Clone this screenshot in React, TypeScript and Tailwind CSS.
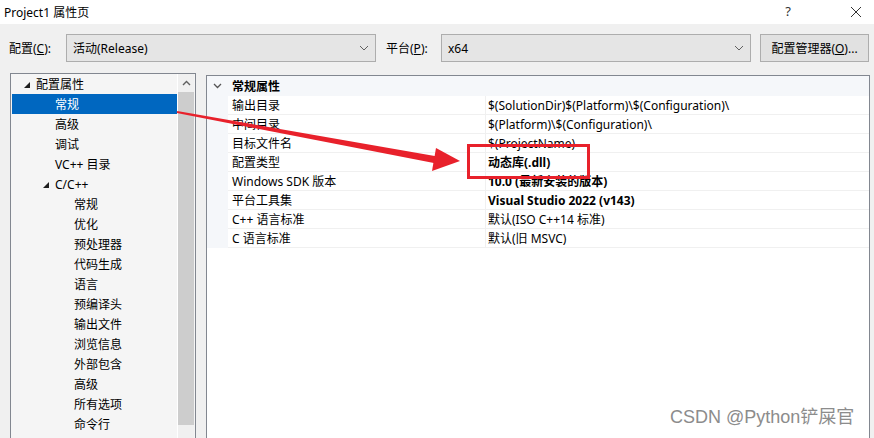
import React from "react";

const FONT = { fontFamily: '"Noto Sans", "Noto Sans CJK SC", sans-serif' };

function Chevron() {
  return (
    <svg width="10" height="6" viewBox="0 0 10 6" className="shrink-0">
      <polyline points="1,1 5,5 9,1" fill="none" stroke="#606060" strokeWidth="1" />
    </svg>
  );
}

function Dropdown({ value, width }: { value: string; width: string }) {
  return (
    <div className={`${width} h-[28px] bg-[#e5e5e5] border border-[#adadad] flex items-center justify-between pl-[6px] pr-[6px]`}>
      <span className="text-[12px] text-black pt-[2px]">{value}</span>
      <Chevron />
    </div>
  );
}

type TreeItem = { label: string; level: number; expander?: boolean; selected?: boolean };

const tree: TreeItem[] = [
  { label: "配置属性", level: 0, expander: true },
  { label: "常规", level: 1, selected: true },
  { label: "高级", level: 1 },
  { label: "调试", level: 1 },
  { label: "VC++ 目录", level: 1 },
  { label: "C/C++", level: 1, expander: true },
  { label: "常规", level: 2 },
  { label: "优化", level: 2 },
  { label: "预处理器", level: 2 },
  { label: "代码生成", level: 2 },
  { label: "语言", level: 2 },
  { label: "预编译头", level: 2 },
  { label: "输出文件", level: 2 },
  { label: "浏览信息", level: 2 },
  { label: "外部包含", level: 2 },
  { label: "高级", level: 2 },
  { label: "所有选项", level: 2 },
  { label: "命令行", level: 2 },
];

const rows: { name: string; value: string; bold?: boolean }[] = [
  { name: "输出目录", value: "$(SolutionDir)$(Platform)\\$(Configuration)\\" },
  { name: "中间目录", value: "$(Platform)\\$(Configuration)\\" },
  { name: "目标文件名", value: "$(ProjectName)" },
  { name: "配置类型", value: "动态库(.dll)", bold: true },
  { name: "Windows SDK 版本", value: "10.0 (最新安装的版本)", bold: true },
  { name: "平台工具集", value: "Visual Studio 2022 (v143)", bold: true },
  { name: "C++ 语言标准", value: "默认(ISO C++14 标准)" },
  { name: "C 语言标准", value: "默认(旧 MSVC)" },
];

function Expander() {
  return (
    <svg width="7" height="7" viewBox="0 0 7 7" className="shrink-0">
      <polygon points="6,0 6,6 0,6" fill="#1e1e1e" />
    </svg>
  );
}

export default function App() {
  return (
    <div className="relative w-[874px] h-[438px] overflow-hidden bg-[#f0f0f0] text-black" style={FONT}>
      {/* Title bar */}
      <div className="h-[24px] bg-white flex items-center justify-between pl-[4px]">
        <span className="text-[12px] pt-[1px]">Project1 属性页</span>
        <div className="flex items-center">
          <span className="text-[13px] text-[#333] mr-[59px]">?</span>
          <svg width="12" height="12" viewBox="0 0 12 12" className="mr-[12px]">
            <line x1="1" y1="1" x2="11" y2="11" stroke="#333" strokeWidth="1" />
            <line x1="11" y1="1" x2="1" y2="11" stroke="#333" strokeWidth="1" />
          </svg>
        </div>
      </div>

      {/* Toolbar */}
      <div className="flex items-center h-[28px] mt-[10px] pl-[9px]">
        <span className="text-[12px] w-[57px] pt-[2px]">
          配置(<span className="underline">C</span>):
        </span>
        <Dropdown value="活动(Release)" width="w-[310px]" />
        <span className="text-[12px] ml-[10px] w-[55px] pt-[2px]">
          平台(<span className="underline">P</span>):
        </span>
        <Dropdown value="x64" width="w-[310px]" />
        <div className="ml-[9px] w-[109px] h-[28px] bg-[#e1e1e1] border border-[#adadad] flex items-center justify-center text-[12px] pt-[2px]">
          配置管理器(<span className="underline">O</span>)...
        </div>
      </div>

      {/* Main */}
      <div className="flex items-start mt-[11px] pl-[10px]">
        {/* Left tree panel */}
        <div className="w-[186px] h-[380px] border border-[#828790] bg-[#f5f5f5] flex pl-[1px]">
          <div className="w-[165px] flex flex-col">
            {tree.map((t, i) => (
              <div
                key={i}
                className={`h-[20px] flex items-center text-[12px] pt-[2px] ${t.selected ? "bg-[#0067c0] text-white" : ""}`}
              >
                <div
                  className={`flex items-center justify-end pr-[5px] ${
                    t.level === 0 ? "w-[24px]" : t.level === 1 ? "w-[43px]" : "w-[62px]"
                  }`}
                >
                  {t.expander ? <Expander /> : null}
                </div>
                <span>{t.label}</span>
              </div>
            ))}
          </div>
          <div className="w-[1px] bg-white" />
          <div className="w-[16px] bg-[#f0f0f0] flex flex-col">
            <div className="h-[18px] flex items-center justify-center">
              <svg width="9" height="6" viewBox="0 0 9 6">
                <polyline points="1,5 4.5,1.5 8,5" fill="none" stroke="#606060" strokeWidth="1.4" />
              </svg>
            </div>
            <div className="h-[333px] bg-[#cdcdcd]" />
          </div>
        </div>

        {/* Right property grid */}
        <div className="ml-[10px] mt-[2px] w-[664px] h-[380px] border border-[#828790] bg-white flex flex-col">
          <div className="h-[20px] bg-[#f5f7fa] flex items-center">
            <div className="w-[21px] flex justify-center">
              <svg width="9" height="6" viewBox="0 0 9 6">
                <polyline points="1,1 4.5,4.5 8,1" fill="none" stroke="#555" strokeWidth="1.3" />
              </svg>
            </div>
            <span className="text-[12px] font-bold ml-[4px] pt-[2px]">常规属性</span>
          </div>
          {rows.map((r, i) => (
            <div key={i} className="h-[19px] flex">
              <div className="w-[21px] bg-[#f5f7fa]" />
              <div className="flex-1 flex border-b border-[#f0f0f0]">
                <div className="w-[257px] flex items-center pl-[4px] pt-[2px] text-[12px]">{r.name}</div>
                <div className="w-[1px] bg-[#f0f0f0]" />
                <div className={`flex-1 flex items-center pl-[2px] pt-[2px] text-[12px] ${r.bold ? "font-bold" : ""}`}>
                  {r.value}
                </div>
              </div>
            </div>
          ))}
        </div>
      </div>

      {/* Annotation: red box */}
      <div className="absolute left-[467px] top-[144px] w-[123px] h-[35px] border-[3px] border-[#e8212b]" />

      {/* Annotation: arrow */}
      <svg className="absolute left-0 top-0 pointer-events-none" width="874" height="438" viewBox="0 0 874 438">
        <polygon points="177.2,111 437.6,156.6 436.4,163.4 176.8,113" fill="#e8212b" />
        <polygon points="436,148 460,161 432,171" fill="#e8212b" />
      </svg>

      {/* Watermark */}
      <div
        className="absolute left-[670px] top-[404px] text-[18px] text-[#8c8c8c]"
        style={{ fontFamily: '"Liberation Sans", "Noto Sans CJK SC", sans-serif' }}
      >
        CSDN @Python铲屎官
      </div>
    </div>
  );
}
